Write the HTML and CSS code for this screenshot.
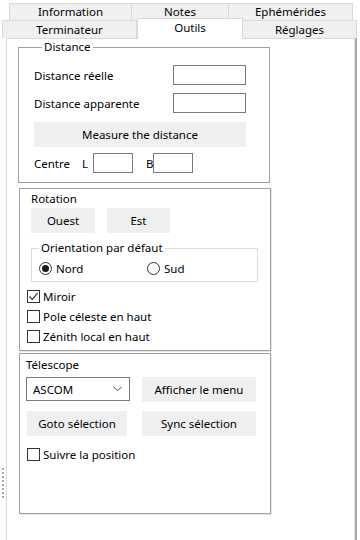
FILE: index.html
```html
<!DOCTYPE html>
<html lang="fr">
<head>
<meta charset="utf-8">
<link rel="stylesheet" href="styles.css">
</head>
<body>
<div class="grip"><span></span><span></span><span></span><span></span><span></span><span></span><span></span><span></span></div>
<div class="tabctl">
  <div class="tabrow row1">
    <div class="tab t-info">Information</div>
    <div class="tab t-notes">Notes</div>
    <div class="tab t-eph">Ephémérides</div>
  </div>
  <div class="tabrow row2">
    <div class="tab t-term">Terminateur</div>
    <div class="tab t-outils active">Outils</div>
    <div class="tab t-regl">Réglages</div>
  </div>
  <div class="page">
    <fieldset class="group distance">
      <legend>Distance</legend>
      <div class="frow r1"><span>Distance réelle</span><span class="input wide"></span></div>
      <div class="frow r2"><span>Distance apparente</span><span class="input wide"></span></div>
      <div class="btn measure">Measure the distance</div>
      <div class="crow"><span class="lbl-centre">Centre</span><span class="lbl-l">L</span><span class="input small"></span><span class="lbl-b">B</span><span class="input small"></span></div>
    </fieldset>

    <div class="panel rotation">
      <div class="ptitle">Rotation</div>
      <div class="btnrow">
        <div class="btn ouest">Ouest</div>
        <div class="btn est">Est</div>
      </div>
      <fieldset class="group orient">
        <legend>Orientation par défaut</legend>
        <div class="radios">
          <span class="radio-item nord"><span class="radio on"></span>Nord</span>
          <span class="radio-item"><span class="radio"></span>Sud</span>
        </div>
      </fieldset>
      <div class="check first"><span class="box on"><svg width="11" height="11" viewBox="0 0 11 11"><path d="M1.5 5.5 L4.2 8.3 L9.6 2.2" fill="none" stroke="#333" stroke-width="1.2"/></svg></span>Miroir</div>
      <div class="check"><span class="box"></span>Pole céleste en haut</div>
      <div class="check"><span class="box"></span>Zénith local en haut</div>
    </div>

    <div class="panel telescope">
      <div class="ptitle tt">Télescope</div>
      <div class="trow">
        <div class="combo"><span>ASCOM</span><svg width="9" height="6" viewBox="0 0 9 6"><path d="M0.5 0.8 L4.5 4.8 L8.5 0.8" fill="none" stroke="#444" stroke-width="1"/></svg></div>
        <div class="btn tbtn">Afficher le menu</div>
      </div>
      <div class="trow two">
        <div class="btn goto">Goto sélection</div>
        <div class="btn tbtn">Sync sélection</div>
      </div>
      <div class="check tcheck"><span class="box"></span>Suivre la position</div>
    </div>
  </div>
</div>
</body>
</html>
```

FILE: styles.css
```css
html, body {
  margin: 0;
  padding: 0;
  background: #ffffff;
}
body {
  width: 360px;
  height: 540px;
  overflow: hidden;
  display: flex;
  font-family: "Noto Sans", "Open Sans", sans-serif;
  font-size: 11.5px;
  color: #000;
}
.grip {
  width: 6px;
  flex: none;
  display: flex;
  flex-direction: column;
  align-items: center;
  gap: 2px;
  padding-top: 468px;
}
.grip span {
  width: 2px;
  height: 2px;
  background: #a8a8a8;
}
.tabctl {
  margin-left: -4px;
  width: 355px;
  display: flex;
  flex-direction: column;
  padding-top: 3px;
}
.tabrow {
  display: flex;
}
.tab {
  box-sizing: border-box;
  background: #f0f0f0;
  border: 1px solid #d9d9d9;
  border-bottom: none;
  text-align: center;
  line-height: 16px;
  height: 17px;
  flex: none;
}
.row1 { padding-left: 7px; }
.row1 .tab { height: 17px; }
.t-info { width: 123px; }
.t-notes { width: 97px; border-left: none; }
.t-eph { width: 124px; border-left: none; }
.row2 { height: 18px; }
.row2 .tab { height: 18px; line-height: 17px; }
.t-term { width: 135px; border-top: 1px solid #d9d9d9; }
.t-outils { width: 106px; }
.t-regl { width: 114px; border-left: none; }
.tab.active {
  background: #fff;
  height: 21px;
  margin-top: -2px;
  line-height: 17px;
  position: relative;
  z-index: 1;
}
.page {
  box-sizing: border-box;
  margin-left: 4px;
  width: 351px;
  flex: 1;
  border-top: 1px solid #d9d9d9;
  border-left: 1px solid #d9d9d9;
  border-right: 2px solid #a9a9a9;
  box-shadow: inset -1px 0 0 #e3e3e3;
  background: #fff;
  padding: 0 0 0 11px;
}

/* group boxes */
.group {
  margin: 0;
  border: 1px solid #a0a0a0;
  padding: 0;
  box-sizing: border-box;
}
.group legend {
  padding: 0 2px;
  margin-left: 8px;
  line-height: 16px;
}
.distance {
  width: 252px;
  height: 144px;
  margin-top: 0px;
  padding: 1px 23px 0 15px;
  display: flex;
  flex-direction: column;
}
.frow {
  display: flex;
  justify-content: space-between;
  align-items: center;
  height: 20px;
}
.frow.r1 { margin-top: 9px; }
.frow.r2 { margin-top: 8px; }
.input {
  box-sizing: border-box;
  border: 1px solid #7a7a7a;
  background: #fff;
  height: 20px;
  display: inline-block;
}
.input.wide { width: 73px; }
.input.small { width: 40px; }
.btn {
  box-sizing: border-box;
  background: #efefef;
  display: flex;
  align-items: center;
  justify-content: center;
  height: 25px;
}
.measure {
  margin-top: 9px;
  height: 25px;
}
.crow {
  display: flex;
  align-items: center;
  height: 20px;
  margin-top: 6px;
}
.lbl-centre { width: 48px; }
.lbl-l { width: 11px; }
.lbl-b { width: 7px; margin-left: 13px; }

/* panels */
.panel {
  box-sizing: border-box;
  width: 252px;
  margin-left: 1px;
  border: 1px solid #a0a0a0;
  box-shadow: 1px 1px 0 #e6e6e6;
}
.rotation {
  margin-top: 5px;
  height: 163px;
  padding: 2px 0 0 11px;
}
.ptitle {
  line-height: 16px;
  height: 16px;
}
.btnrow {
  display: flex;
  gap: 12px;
  margin-top: 1px;
}
.ouest { width: 64px; }
.est { width: 63px; }
.orient {
  width: 227px;
  height: 42px;
  margin-top: 7px;
  border-color: #dcdcdc;
}
.orient legend { margin-left: 7px; }
.radios {
  display: flex;
  align-items: center;
  padding-left: 7px;
  margin-top: 5px;
}
.radio-item {
  display: flex;
  align-items: center;
  gap: 4px;
}
.radio-item.nord { width: 108px; }
.radio {
  box-sizing: border-box;
  width: 13px;
  height: 13px;
  border: 1px solid #333;
  border-radius: 50%;
  display: flex;
  align-items: center;
  justify-content: center;
}
.radio.on::after {
  content: "";
  width: 7px;
  height: 7px;
  border-radius: 50%;
  background: #1a1a1a;
}
.check {
  display: flex;
  align-items: center;
  gap: 3px;
  height: 20px;
  margin-left: -4px;
}
.check.first { margin-top: 4px; }
.box {
  box-sizing: border-box;
  width: 13px;
  height: 13px;
  border: 1px solid #333;
  background: #fff;
  display: flex;
  align-items: center;
  justify-content: center;
}
.telescope {
  margin-top: 2px;
  height: 161px;
  padding: 2px 0 0 6px;
}
.tt { height: 18px; line-height: 18px; }
.trow {
  display: flex;
  margin-top: 3px;
  gap: 12px;
}
.trow.two { margin-top: 9px; }
.combo {
  box-sizing: border-box;
  width: 104px;
  height: 24px;
  border: 1px solid #7a7a7a;
  display: flex;
  align-items: center;
  justify-content: space-between;
  padding: 0 7px 0 6px;
}
.tbtn { width: 114px; }
.goto { width: 100px; margin-left: 1px; margin-right: 3px; }
.tcheck { margin-left: 1px; margin-top: 8px; height: 21px; }
```
